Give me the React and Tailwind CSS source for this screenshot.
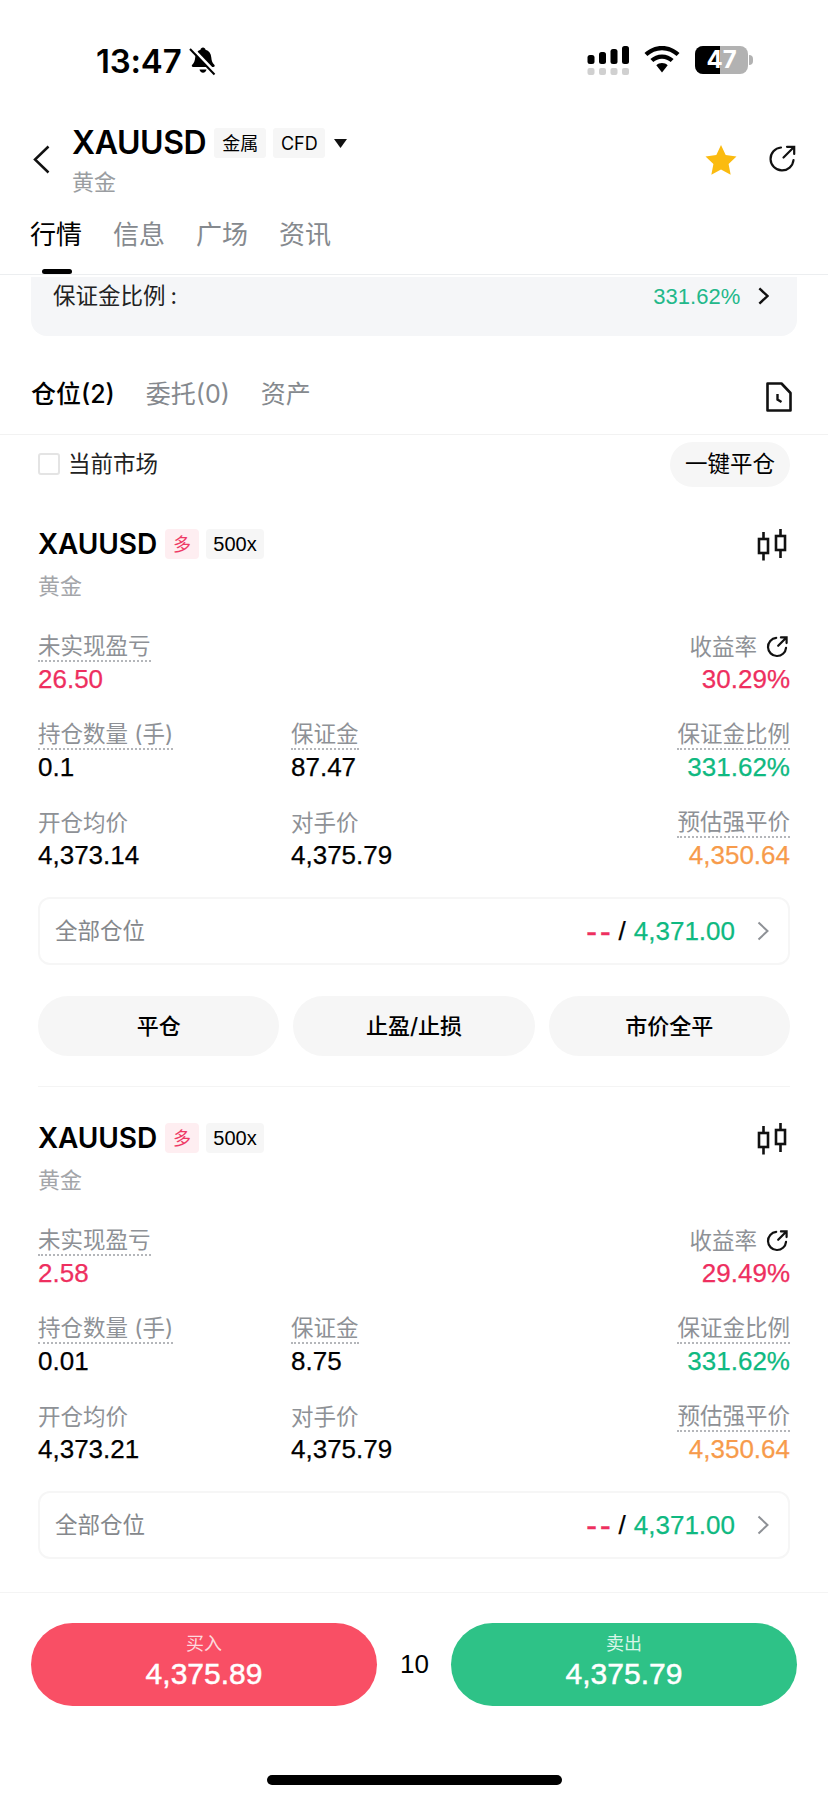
import React from 'react'

// Status bar icons
function BellOff() {
  return (
    <svg width="28" height="30" viewBox="0 0 28 30" fill="none">
      <path d="M14 1.500c1.400 0 2.300 1 2.500 2.200 3.600 1 5.500 4 5.800 7.800.2 3 .9 5.200 3 7.200.9 1 .3 2.300-1 2.300H4.200c-1.300 0-1.900-1.300-1-2.300 2-2 2.800-4.200 3-7.200.3-3.800 2.200-6.800 5.300-7.800.2-1.200 1.100-2.200 2.500-2.200z" fill="#000" />
      <path d="M10.500 23.500h7c-.3 2-1.700 3.200-3.500 3.200s-3.200-1.200-3.500-3.200z" fill="#000" />
      <path d="M3.500 2.500 27 27" stroke="#fff" strokeWidth="3" />
      <path d="M1 3 25.500 28.500" stroke="#000" strokeWidth="2" />
    </svg>
  )
}

function Signal() {
  return (
    <svg width="42" height="30" viewBox="0 0 42 30">
      <rect x="0.500" y="9" width="7" height="9" rx="2.500" fill="#000" />
      <rect x="12" y="6" width="7" height="12" rx="2.500" fill="#000" />
      <rect x="23.500" y="3" width="7" height="15" rx="2.500" fill="#000" />
      <rect x="35" y="0" width="7" height="18" rx="2.500" fill="#000" />
      <rect x="0.500" y="22" width="7" height="7" rx="2" fill="#d0d0d0" />
      <rect x="12" y="22" width="7" height="7" rx="2" fill="#d0d0d0" />
      <rect x="23.500" y="22" width="7" height="7" rx="2" fill="#d0d0d0" />
      <rect x="35" y="22" width="7" height="7" rx="2" fill="#d0d0d0" />
    </svg>
  )
}

function Wifi() {
  return (
    <svg width="36" height="27" viewBox="0 0 36 27">
      <path d="M18 0c6.800 0 13 2.700 17.500 7.100l-2.900 3C28.800 6.400 23.700 4.200 18 4.200S7.200 6.400 3.400 10.100l-2.900-3C5 2.700 11.200 0 18 0z" fill="#000" />
      <path d="M18 8.500c4.500 0 8.500 1.700 11.600 4.600l-2.900 3c-2.300-2.100-5.300-3.400-8.700-3.400s-6.400 1.300-8.700 3.400l-2.900-3C9.500 10.200 13.500 8.500 18 8.500z" fill="#000" />
      <path d="M18 17c2.200 0 4.200.8 5.700 2.200L18 26.500l-5.700-7.300C13.800 17.800 15.800 17 18 17z" fill="#000" />
    </svg>
  )
}

function Battery() {
  return (
    <div className="flex items-center">
      <div className="relative w-[53px] h-[28px] rounded-[8px] overflow-hidden bg-[#b2b2b2] flex items-center justify-center">
        <div className="absolute left-0 top-0 bottom-0 w-[25px] bg-black" />
        <span className="relative text-white font-bold text-[24px] leading-none">47</span>
      </div>
      <div className="w-[4px] h-[10px] ml-px rounded-r-full bg-[#b2b2b2]" />
    </div>
  )
}

// Small icons
function Share({ size = 28, w = 2.200 }) {
  return (
    <svg width={size} height={size} viewBox="0 0 28 28" fill="none" stroke="#111" strokeWidth={w} strokeLinecap="round">
      <path d="M13 2.500A11.500 11.500 0 1 0 25.500 15" />
      <path d="M15.500 12.500 26 2M19 1.800h7.200V9" />
    </svg>
  )
}

function Candles() {
  return (
    <svg width="30" height="32" viewBox="0 0 30 32" fill="none" stroke="#111" strokeWidth="2.600">
      <rect x="2" y="10" width="9" height="14" />
      <path d="M6.500 3v7M6.500 24v7.500" />
      <rect x="19" y="7" width="9" height="14" />
      <path d="M23.500 0v7M23.500 21v8" />
    </svg>
  )
}

function DocClock() {
  return (
    <svg width="26" height="30" viewBox="0 0 26 30" fill="none" stroke="#111" strokeWidth="2.600">
      <path d="M1.500 1.500h14l9 9.500v17.500h-23z" strokeLinejoin="round" />
      <path d="M11.500 12v5.500l4 2.500" strokeWidth="2.400" />
    </svg>
  )
}

function Chevron({ color = '#111', h = 18, w = 2.400 }) {
  return (
    <svg width={h * 0.6} height={h} viewBox="0 0 12 20" fill="none" stroke={color} strokeWidth={w * 20 / h}>
      <path d="M1.500 1.500 10.500 10 1.500 18.500" />
    </svg>
  )
}

// Label + value cell
function Stat({ label, value, color = 'text-black', dotted = true, right = false, icon }) {
  return (
    <div className={`flex flex-col ${right ? 'items-end' : 'items-start'}`}>
      <div className={`h-[30px] flex items-center gap-[9px] text-[22.500px] leading-[26px] text-[#8e9196] ${dotted ? 'border-b-2 border-dotted border-[#b4b6ba]' : ''}`}>
        {label}
        {icon}
      </div>
      <div className={`h-[36px] pb-px flex items-center font-['Liberation_Sans',sans-serif] text-[26px] [-webkit-text-stroke:0.25px_currentColor] ${color}`}>{value}</div>
    </div>
  )
}

function Position({ pnl, rate, size, margin, open, extraButtons }) {
  return (
    <div className="px-[38px]">
      <div className="flex items-center justify-between h-[36px]">
        <div className="flex items-center">
          <span className="text-[28px] font-semibold tracking-[-0.1px] text-black">XAUUSD</span>
          <span className="ml-[8px] w-[34px] h-[30px] rounded-[4px] bg-[#feeef1] text-[#ee3a66] text-[18px] flex items-center justify-center">多</span>
          <span className="ml-[7px] w-[58px] h-[30px] rounded-[4px] bg-[#f6f6f6] text-black font-['Liberation_Sans',sans-serif] text-[20px] flex items-center justify-center">500x</span>
        </div>
        <div className="mr-[3px] mt-[2px]"><Candles /></div>
      </div>
      <div className="mt-[9px] h-[30px] flex items-center text-[22px] text-[#a3a5a9]">黄金</div>
      <div className="mt-[31px] flex flex-col gap-[22px]">
        <div className="flex justify-between">
          <Stat label="未实现盈亏" value={pnl} color="text-[#ee2f5f]" />
          <Stat label="收益率" value={rate} color="text-[#ee2f5f]" dotted={false} right icon={<span className="mr-[2px]"><Share size={22} w={2.800} /></span>} />
        </div>
        <div className="grid grid-cols-[253px_1fr_auto]">
          <Stat label="持仓数量 (手)" value={size} />
          <Stat label="保证金" value={margin} />
          <Stat label="保证金比例" value="331.62%" color="text-[#0fb981]" right />
        </div>
        <div className="grid grid-cols-[253px_1fr_auto]">
          <Stat label="开仓均价" value={open} dotted={false} />
          <Stat label="对手价" value="4,375.79" dotted={false} />
          <Stat label="预估强平价" value="4,350.64" color="text-[#f79b4b]" right />
        </div>
      </div>
      <div className="mt-[23px] h-[68px] rounded-[12px] border-2 border-[#f6f6f6] pl-[15px] pr-[19px] flex items-center justify-between">
        <span className="text-[22.500px] text-[#85888c]">全部仓位</span>
        <div className="flex items-center font-['Liberation_Sans',sans-serif] text-[26px] [-webkit-text-stroke:0.25px_currentColor]">
          <span className="text-[32px] leading-none text-[#ee2f5f] tracking-[3px] [-webkit-text-stroke:0.5px_currentColor]">--</span>
          <span className="ml-[5px] text-black">/</span>
          <span className="ml-[8px] text-[#0fb981]">4,371.00</span>
          <span className="ml-[22px]"><Chevron color="#8e9196" h={20} w={2} /></span>
        </div>
      </div>
      {extraButtons && (
        <>
          <div className="mt-[31px] grid grid-cols-3 gap-[14px]">
            {['平仓', '止盈/止损', '市价全平'].map(t => (
              <div key={t} className="h-[60px] rounded-full bg-[#f6f6f6] flex items-center justify-center text-[22px] font-medium text-black">{t}</div>
            ))}
          </div>
          <div className="mt-[30px] h-px bg-[#f4f4f4]" />
        </>
      )}
    </div>
  )
}

export default function App() {
  return (
    <div className="w-[828px] h-[1800px] bg-white flex flex-col overflow-hidden font-['Inter','Noto_Sans_CJK_SC',sans-serif]">
      {/* status bar */}
      <div className="h-[110px] shrink-0 relative flex justify-between pt-[44px] pl-[96px] pr-[75px]">
        <div className="flex items-start gap-[8px]">
          <span className="text-[33px] leading-[34px] font-semibold text-black tracking-[-0.2px]">13:47</span>
          <span className="mt-[2px]"><BellOff /></span>
        </div>
        <div className="flex items-start gap-[15px] pt-[2px]">
          <Signal />
          <Wifi />
          <Battery />
        </div>
      </div>

      {/* header */}
      <div className="h-[100px] shrink-0 flex pl-[33px] pr-[32px]">
        <div className="pt-[35px] w-[39px]">
          <svg width="17" height="29" viewBox="0 0 17 29" fill="none" stroke="#111" strokeWidth="2.500"><path d="M15.500 1.500 2 14.500 15.500 27.500" /></svg>
        </div>
        <div className="flex-1 pt-[10px]">
          <div className="flex items-center h-[46px]">
            <span className="text-[32px] font-semibold text-black tracking-[-0.4px]">XAUUSD</span>
            <span className="ml-[8px] w-[52px] h-[30px] rounded-[3px] bg-[#f6f6f6] text-[18px] text-black flex items-center justify-center">金属</span>
            <span className="ml-[7px] w-[52px] h-[30px] rounded-[3px] bg-[#f6f6f6] text-[18px] text-black flex items-center justify-center">CFD</span>
            <svg className="ml-[9px]" width="13" height="9" viewBox="0 0 13 9"><path d="M0 0h13L6.500 9z" fill="#111" /></svg>
          </div>
          <div className="text-[22px] leading-[26px] mt-[3px] text-[#9a9da1]">黄金</div>
        </div>
        <div className="flex items-start pt-[35px] gap-[31px]">
          <svg width="32" height="30" viewBox="0 0 34 32"><path d="M17 0l5 10.700 11.500 1.500-8.400 8 2.200 11.600L17 26.200 6.700 31.800l2.200-11.600-8.400-8L12 10.700z" fill="#fbbb10" /></svg>
          <Share size={28} />
        </div>
      </div>

      {/* tabs */}
      <div className="h-[65px] shrink-0 relative flex gap-[31px] pl-[30px] border-b border-[#eceef0] text-[26px] leading-[30px] pt-[10px] text-[#85898e]">
        <span className="text-black">行情</span>
        <span>信息</span>
        <span>广场</span>
        <span>资讯</span>
        <div className="absolute left-[42px] bottom-0 w-[30px] h-[5px] rounded-full bg-black" />
      </div>

      {/* margin ratio panel */}
      <div className="mx-[31px] mt-[2px] h-[59px] shrink-0 rounded-b-[16px] bg-[#f5f6f8] flex items-start justify-between pl-[22px] pr-[28px] pt-[6px]">
        <span className="text-[22.500px] leading-[26px] text-[#222]">保证金比例<span className="ml-[5px]">:</span></span>
        <div className="flex items-center h-[26px] gap-[18px]">
          <span className="font-['Liberation_Sans',sans-serif] text-[22px] text-[#23b88a]">331.62%</span>
          <Chevron h={18} />
        </div>
      </div>

      {/* positions */}
      <div className="h-[99px] shrink-0 border-b border-[#f2f2f2] flex items-start justify-between pl-[31px] pr-[36px] pt-[43px]">
        <div className="flex gap-[31px] text-[25px] leading-[30px] text-[#85898e]">
          <span className="text-black font-medium">仓位(2)</span>
          <span>委托(0)</span>
          <span>资产</span>
        </div>
        <div className="mt-[3px]"><DocClock /></div>
      </div>

      <div className="h-[53px] shrink-0 flex items-center justify-between pl-[38px] pr-[38px] pt-[5px]">
        <div className="flex items-center gap-[8px]">
          <div className="w-[22px] h-[22px] rounded-[3px] border-2 border-[#e4e4e4]" />
          <span className="text-[22.500px] text-[#222]">当前市场</span>
        </div>
        <div className="w-[120px] h-[45px] rounded-full bg-[#f6f6f6] flex items-center justify-center text-[22.500px] text-black">一键平仓</div>
      </div>

      {/* scrolling list */}
      <div className="flex-1 min-h-0 overflow-hidden pt-[38px] flex flex-col gap-[33px]">
        <Position pnl="26.50" rate="30.29%" size="0.1" margin="87.47" open="4,373.14" extraButtons />
        <Position pnl="2.58" rate="29.49%" size="0.01" margin="8.75" open="4,373.21" />
      </div>

      {/* trade bar */}
      <div className="h-[208px] shrink-0 border-t border-[#f4f4f4] flex flex-col">
        <div className="mt-[30px] px-[31px] flex items-center justify-between">
          <div className="w-[346px] h-[83px] rounded-full bg-[#f94f65] flex flex-col items-center justify-center text-white">
            <span className="text-[18px] leading-[22px] text-[#fdd9de] -mt-[3px]">买入</span>
            <span className="font-['Liberation_Sans',sans-serif] text-[30px] leading-[38px] [-webkit-text-stroke:0.5px_currentColor]">4,375.89</span>
          </div>
          <span className="font-['Liberation_Sans',sans-serif] text-[26px] text-black ml-px">10</span>
          <div className="w-[346px] h-[83px] rounded-full bg-[#2ec287] flex flex-col items-center justify-center text-white">
            <span className="text-[18px] leading-[22px] text-[#d8f5e8] -mt-[3px]">卖出</span>
            <span className="font-['Liberation_Sans',sans-serif] text-[30px] leading-[38px] [-webkit-text-stroke:0.5px_currentColor]">4,375.79</span>
          </div>
        </div>
        <div className="mt-[69px] mx-auto w-[295px] h-[10px] rounded-full bg-black" />
      </div>
    </div>
  )
}
